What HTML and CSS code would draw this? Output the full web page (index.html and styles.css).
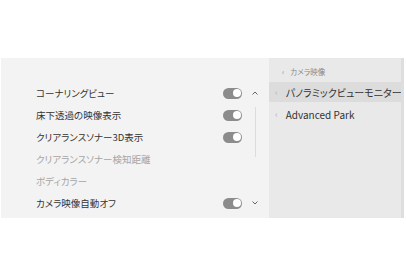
FILE: index.html
```html
<!DOCTYPE html>
<html lang="ja">
<head>
<meta charset="utf-8">
<link rel="stylesheet" href="styles.css">
</head>
<body>
<div class="panel">
  <div class="main">
    <div class="list">
      <div class="row"><span class="label">コーナリングビュー</span><span class="toggle"></span></div>
      <div class="row"><span class="label">床下透過の映像表示</span><span class="toggle"></span></div>
      <div class="row"><span class="label">クリアランスソナー3D表示</span><span class="toggle"></span></div>
      <div class="row dim"><span class="label">クリアランスソナー検知距離</span></div>
      <div class="row dim"><span class="label">ボディカラー</span></div>
      <div class="row"><span class="label">カメラ映像自動オフ</span><span class="toggle"></span></div>
    </div>
    <div class="scroll">
      <svg class="chev" width="8" height="6" viewBox="0 0 8 6"><path d="M1.5 4.5 L4 2 L6.5 4.5" fill="none" stroke="#666" stroke-width="1"/></svg>
      <div class="track"></div>
      <svg class="chev" width="8" height="6" viewBox="0 0 8 6"><path d="M1.5 1.5 L4 4 L6.5 1.5" fill="none" stroke="#666" stroke-width="1"/></svg>
    </div>
  </div>
  <div class="side">
    <div class="crumb"><span class="lt">‹</span>カメラ映像</div>
    <div class="item active"><span class="lt">‹</span>パノラミックビューモニター</div>
    <div class="item"><span class="lt">‹</span>Advanced Park</div>
  </div>
  <div class="edge"></div>
</div>
</body>
</html>
```
FILE: styles.css
```css
html, body { margin: 0; padding: 0; background: #fff; }
body {
  width: 406px; height: 276px;
  font-family: "Noto Sans CJK JP", "Noto Sans", sans-serif;
  font-feature-settings: "palt";
  padding-top: 58px;
  box-sizing: border-box;
}
.panel {
  margin-left: 1px;
  width: 403px;
  height: 160px;
  display: flex;
  background: #f3f3f3;
}
.main {
  width: 268px;
  flex-shrink: 0;
  display: flex;
  padding-top: 24px;
  box-sizing: border-box;
}
.list {
  width: 206px;
  padding-left: 35px;
  display: flex;
  flex-direction: column;
}
.row {
  height: 22px;
  display: flex;
  align-items: center;
  justify-content: space-between;
  font-size: 9.5px;
  color: #333;
  white-space: nowrap;
}
.row.dim { color: #a5a5a5; }
.toggle {
  width: 19px; height: 11px;
  border-radius: 6px;
  background: #8c8c8c;
  position: relative;
}
.toggle::after {
  content: "";
  position: absolute;
  right: 1.5px; top: 1.5px;
  width: 8px; height: 8px;
  border-radius: 50%;
  background: #fff;
}
.scroll {
  width: 12px;
  margin-left: 7px;
  display: flex;
  flex-direction: column;
  align-items: center;
  padding-top: 8px;
}
.chev { display: block; }
.track {
  width: 1px;
  height: 50px;
  background: #dcdcdc;
  margin: 11px 0 43px;
}
.side {
  flex: 1;
  min-width: 0;
  overflow: hidden;
  background: #e9e9e9;
  padding-top: 3px;
}
.edge { width: 3px; flex-shrink: 0; background: #dedede; }
.crumb {
  height: 21px;
  display: flex;
  align-items: center;
  padding-left: 13px;
  font-size: 7.5px;
  color: #8a8a8a;
  white-space: nowrap;
}
.crumb .lt { margin-right: 6px; }
.item {
  height: 20px;
  margin-bottom: 2px;
  display: flex;
  align-items: center;
  padding-left: 6px;
  font-size: 10px;
  color: #333;
  white-space: nowrap;
}
.item .lt { color: #b5b5b5; margin-right: 8px; font-size: 9px; }
.item.active { background: #dcdcdc; }
```
